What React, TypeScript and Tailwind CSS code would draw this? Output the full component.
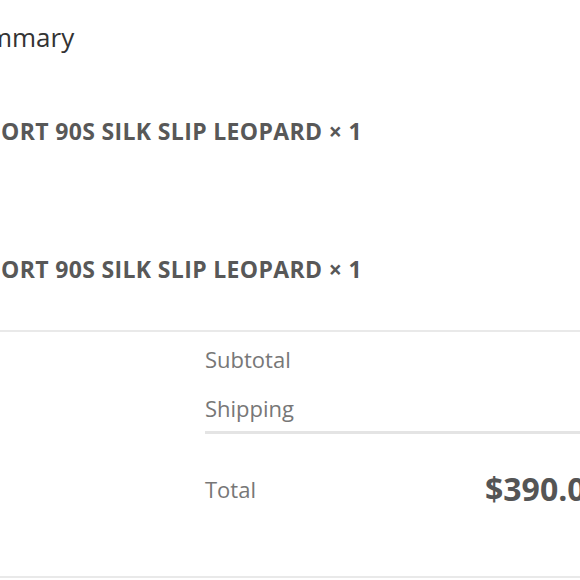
import React from "react";

const items = [
  { pre: "SLIP SH", name: "ORT 90S SILK SLIP LEOPARD", qty: 1 },
  { pre: "SLIP SH", name: "ORT 90S SILK SLIP LEOPARD", qty: 1 },
];

export default function App() {
  return (
    <div className="w-[580px] h-[580px] overflow-hidden bg-white font-['Open_Sans',sans-serif]">
      {/* Summary header (page is scrolled sideways, first letters run off the left edge) */}
      <div className="h-[62px] pt-[21px]">
        <h2 className="flex text-[26px] leading-[32px] text-[#333] whitespace-nowrap">
          <span className="w-[12px] shrink-0 flex justify-end">Sum</span>
          <span>mary</span>
        </h2>
      </div>

      {/* Line items */}
      <div>
        {items.map((item, i) => (
          <div key={i} className={`pt-[55px] ${i === 0 ? "pb-[55px]" : "pb-[47px]"}`}>
            <p className="flex text-[23px] leading-[28px] font-bold tracking-[0.35px] text-[#585858] whitespace-nowrap">
              <span className="w-[1px] shrink-0 flex justify-end">{item.pre}</span>
              <span>
                {item.name} × {item.qty}
              </span>
            </p>
          </div>
        ))}
      </div>

      {/* Totals */}
      <div className="border-t-2 border-b-2 border-[#e9e9e9] flex">
        <div className="w-[205px] shrink-0" />
        <div className="flex-1 min-w-0">
          <div className="border-b-[3px] border-[#e4e4e4] pt-[12px] pb-[8px] flex flex-col gap-[19px]">
            <div className="text-[22px] leading-[30px] text-[#777] whitespace-nowrap">Subtotal</div>
            <div className="text-[22px] leading-[30px] text-[#777] whitespace-nowrap">Shipping</div>
          </div>
          <div className="flex items-center pt-[37px] pb-[69px] whitespace-nowrap">
            <span className="w-[280px] shrink-0 text-[22px] leading-[36px] text-[#777]">Total</span>
            <span className="text-[32px] leading-[36px] font-bold text-[#555]">$390.00</span>
          </div>
        </div>
      </div>
    </div>
  );
}
